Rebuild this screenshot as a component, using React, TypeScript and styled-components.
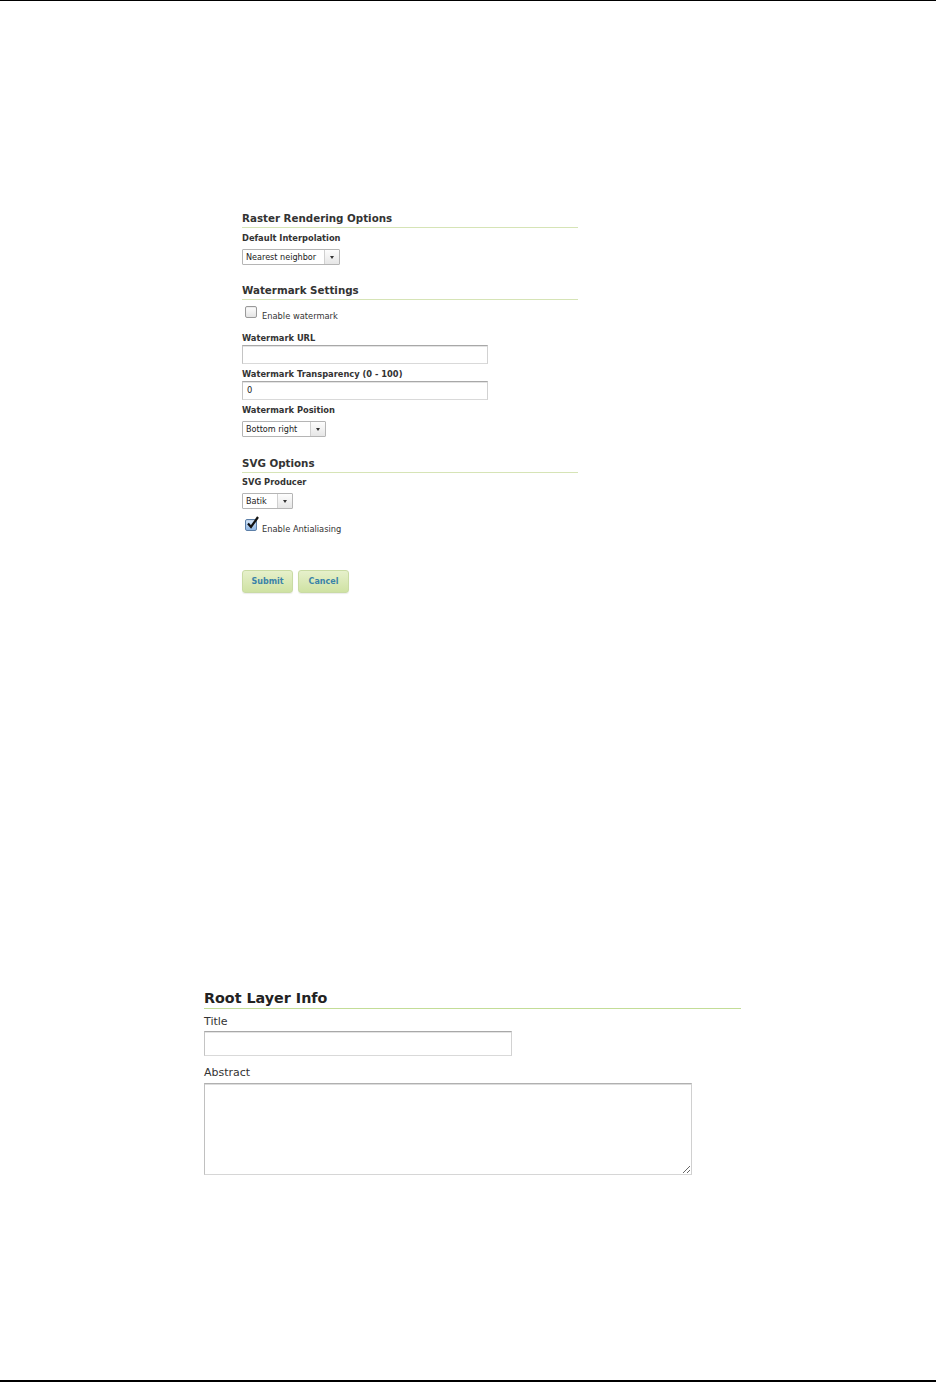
import styled, { createGlobalStyle } from 'styled-components'

const GlobalStyle = createGlobalStyle`
    html, body {
        margin: 0;
        padding: 0;
        background: #fff;
    }
    body {
        font-family: "DejaVu Sans", Verdana, sans-serif;
        color: #333;
    }
`

const Page = styled.div`
    box-sizing: border-box;
    width: 936px;
    height: 1382px;
    border-top: 1px solid #000;
    border-bottom: 2px solid #000;
    display: flex;
    flex-direction: column;
`

const SettingsForm = styled.div`
    margin: 210px 0 0 242px;
    width: 336px;
    display: flex;
    flex-direction: column;
    align-items: flex-start;
`

const SectionTitle = styled.h3<{ $gap: number }>`
    align-self: stretch;
    margin: ${props => props.$gap}px 0 0;
    font-size: 10.3px;
    font-weight: bold;
    line-height: 14px;
    padding-bottom: 2px;
    color: #333;
    border-bottom: 1px solid #d6e4b6;
`

const FieldLabel = styled.label<{ $gap: number }>`
    display: block;
    margin-top: ${props => props.$gap}px;
    font-size: 8.3px;
    font-weight: bold;
    line-height: 12px;
    color: #333;
`

const Dropdown = styled.div<{ $width: number }>`
    box-sizing: border-box;
    margin-top: 5px;
    width: ${props => props.$width}px;
    height: 16px;
    display: flex;
    border: 1px solid #b5b5b5;
    border-radius: 1px;
    background: #fff;
`

const DropdownText = styled.span`
    flex: 1;
    padding-left: 3px;
    font-size: 8.1px;
    line-height: 14px;
    color: #222;
    white-space: nowrap;
`

const DropdownButton = styled.span`
    width: 14px;
    border-left: 1px solid #d0d0d0;
    background: linear-gradient(#fdfdfd, #e6e6e6);
    display: flex;
    align-items: center;
    justify-content: center;

    &::after {
        content: '';
        border-left: 2.5px solid transparent;
        border-right: 2.5px solid transparent;
        border-top: 3px solid #333;
    }
`

const CheckRow = styled.div<{ $gap: number }>`
    margin-top: ${props => props.$gap}px;
    padding-left: 3px;
    display: flex;
    align-items: flex-start;
    gap: 5px;
`

const CheckBox = styled.span<{ $checked?: boolean }>`
    position: relative;
    box-sizing: border-box;
    width: 12px;
    height: 12px;
    border: 1px solid ${props => (props.$checked ? '#5c7fa8' : '#9a9a9a')};
    border-radius: 2px;
    background: ${props => (props.$checked
        ? 'linear-gradient(#d7e8fb, #8fb6e4)'
        : 'linear-gradient(#ffffff, #e4e4e4)')};
    box-shadow: inset 0 1px 1px rgba(0, 0, 0, 0.08);

    & svg {
        position: absolute;
        left: 0px;
        top: -4px;
    }
`

const CheckText = styled.span`
    margin-top: 4px;
    font-size: 8.3px;
    line-height: 12px;
    color: #333;
`

const TextBox = styled.div<{ $width: number; $height: number; $gap: number; $size: number }>`
    box-sizing: border-box;
    margin-top: ${props => props.$gap}px;
    width: ${props => props.$width}px;
    height: ${props => props.$height}px;
    padding: 0 4px;
    border: 1px solid;
    border-color: #a8a8a8 #d2d2d2 #d9d9d9 #c4c4c4;
    box-shadow: inset 0 1px 0 #e4e4e4;
    background: #fff;
    font-size: ${props => props.$size}px;
    line-height: ${props => props.$height - 2}px;
    color: #222;
`

const ButtonRow = styled.div`
    margin-top: 35px;
    display: flex;
    gap: 5px;
`

const GreenButton = styled.button`
    box-sizing: border-box;
    width: 51px;
    height: 23px;
    padding: 0;
    border: 1px solid #c9dba4;
    border-radius: 3px;
    background: linear-gradient(#e6f0cb, #cfe2a3);
    font-family: "DejaVu Sans", Verdana, sans-serif;
    font-size: 8px;
    font-weight: bold;
    color: #3b83a8;
    box-shadow: 0 1px 1px rgba(0, 0, 0, 0.08);
`

const LayerForm = styled.div`
    margin: 396px 0 0 204px;
    width: 537px;
    display: flex;
    flex-direction: column;
    align-items: flex-start;
`

const LayerTitle = styled.h2`
    align-self: stretch;
    margin: 0;
    font-size: 14.3px;
    font-weight: bold;
    line-height: 18px;
    padding-bottom: 1px;
    color: #222;
    border-bottom: 1px solid #c3dd97;
`

const PlainLabel = styled.label<{ $gap: number }>`
    display: block;
    margin-top: ${props => props.$gap}px;
    font-size: 11px;
    line-height: 14px;
    color: #333;
`

const AreaBox = styled.textarea`
    box-sizing: border-box;
    margin-top: 3px;
    width: 488px;
    height: 92px;
    border: 1px solid;
    border-color: #b0b0b0 #d0d0d0 #d6d6d6 #c0c0c0;
    box-shadow: inset 0 1px 0 #dcdcdc;
    resize: both;
    font-family: "DejaVu Sans", sans-serif;
    outline: none;
`

const Check = () => (
    <svg width="14" height="14" viewBox="0 0 14 14">
        <path d="M2 7.5 L5 11 L12 1" fill="none" stroke="#111" strokeWidth="2.2" />
    </svg>
)

type SelectProps = { value: string; width: number }

const Select = ({ value, width }: SelectProps) => (
    <Dropdown $width={width}>
        <DropdownText>{value}</DropdownText>
        <DropdownButton />
    </Dropdown>
)

export default function App() {
    return (
        <>
            <GlobalStyle />
            <Page>
                <SettingsForm>
                    <SectionTitle $gap={0}>Raster Rendering Options</SectionTitle>
                    <FieldLabel $gap={4}>Default Interpolation</FieldLabel>
                    <Select value="Nearest neighbor" width={98} />

                    <SectionTitle $gap={18}>Watermark Settings</SectionTitle>
                    <CheckRow $gap={6}>
                        <CheckBox />
                        <CheckText>Enable watermark</CheckText>
                    </CheckRow>
                    <FieldLabel $gap={10}>Watermark URL</FieldLabel>
                    <TextBox $gap={1} $width={246} $height={19} $size={8.3} />
                    <FieldLabel $gap={4}>Watermark Transparency (0 - 100)</FieldLabel>
                    <TextBox $gap={1} $width={246} $height={19} $size={8.3}>0</TextBox>
                    <FieldLabel $gap={4}>Watermark Position</FieldLabel>
                    <Select value="Bottom right" width={84} />

                    <SectionTitle $gap={19}>SVG Options</SectionTitle>
                    <FieldLabel $gap={3}>SVG Producer</FieldLabel>
                    <Select value="Batik" width={51} />
                    <CheckRow $gap={10}>
                        <CheckBox $checked>
                            <Check />
                        </CheckBox>
                        <CheckText>Enable Antialiasing</CheckText>
                    </CheckRow>

                    <ButtonRow>
                        <GreenButton>Submit</GreenButton>
                        <GreenButton>Cancel</GreenButton>
                    </ButtonRow>
                </SettingsForm>

                <LayerForm>
                    <LayerTitle>Root Layer Info</LayerTitle>
                    <PlainLabel $gap={6}>Title</PlainLabel>
                    <TextBox $gap={2} $width={308} $height={25} $size={11} />
                    <PlainLabel $gap={10}>Abstract</PlainLabel>
                    <AreaBox />
                </LayerForm>
            </Page>
        </>
    )
}
